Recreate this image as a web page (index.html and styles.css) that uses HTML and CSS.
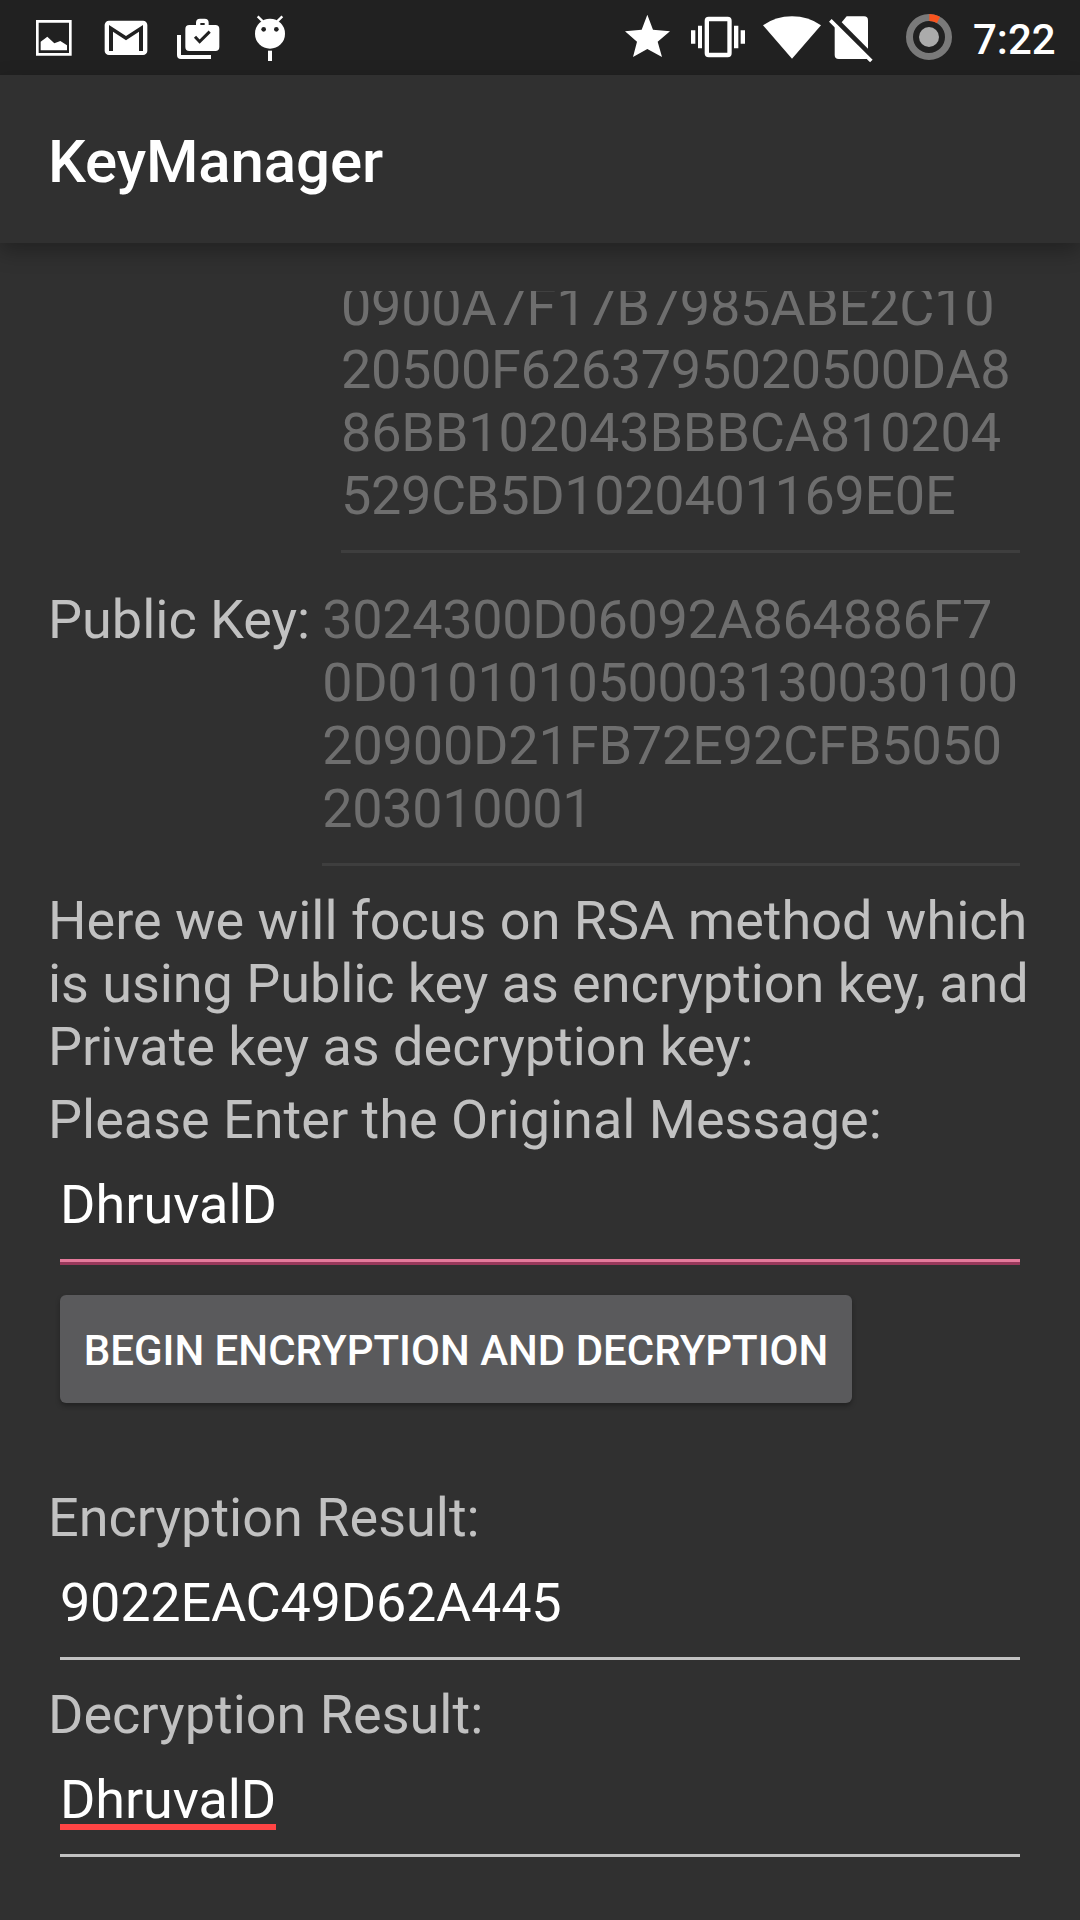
FILE: index.html
```html
<!DOCTYPE html>
<html lang="en">
<head>
<meta charset="utf-8">
<title>KeyManager</title>
<link rel="stylesheet" href="styles.css">
</head>
<body>
<div class="screen">
  <header class="status-bar">
    <svg class="status-icons" width="320" height="75" viewBox="0 0 960 225" fill="#fff">
      <path fill-rule="evenodd" d="M108 60H215V167H108ZM116 68V159H207V68Z"/>
      <path d="M122 125L142 110L163 130L181 123L201 136V151H122Z"/>
      <rect x="314" y="62" width="128" height="103" rx="13"/>
      <path fill="#212121" d="M327 75L378 108L429 75V153H417V95L378 121L339 95V153H327Z"/>
      <path fill-rule="evenodd" d="M568 75H588V68Q588 56 600 56H614Q626 56 626 68V75H646Q658 75 658 87V141Q658 153 646 153H568Q556 153 556 141V87Q556 75 568 75ZM601 75H614V69H601Z"/>
      <path d="M531 105H543V165H633V177H543Q531 177 531 165Z"/>
      <path d="M585 110L599 125L629 95" fill="none" stroke="#212121" stroke-width="9"/>
      <circle cx="810" cy="101" r="45"/>
      <path d="M773 49L789 65M847 49L831 65" stroke="#fff" stroke-width="7"/>
      <path d="M804 152H816V183H804Z"/>
      <circle cx="791" cy="88" r="7" fill="#212121"/><circle cx="829" cy="88" r="7" fill="#212121"/>
    </svg>
    <div class="status-right">
      <svg class="status-icons" width="360" height="75" viewBox="0 0 1080 225" fill="#fff">
        <path d="M142 44L159 89L210 94L173 125L186 171L142 147L99 171L111 125L75 94L125 89Z"/>
        <path fill-rule="evenodd" d="M326 50H383Q395 50 395 62V160Q395 172 383 172H326Q314 172 314 160V62Q314 50 326 50ZM327 64V158H382V64Z"/>
        <path d="M273 91H286V131H273ZM294 77H306V145H294ZM402 77H415V145H402ZM422 91H435V131H422Z"/>
        <path d="M489 76Q527 49 576 49Q625 49 663 76L576 176Z"/>
        <path d="M740 49H792Q804 49 804 61V146L725 67Z"/>
        <path d="M704 78L803 177H716Q704 177 704 165Z"/>
        <path d="M691 61L814 183" stroke="#fff" stroke-width="11"/>
        <circle cx="987" cy="111" r="58.500" fill="none" stroke="#7a7a7a" stroke-width="21"/>
        <path d="M988 42Q1005 42 1020 50L1011 69Q1000 63 988 63Z" fill="#f9541e"/>
        <circle cx="987" cy="111" r="30" fill="#ababab"/>
      </svg>
      <span class="clock">7:22</span>
    </div>
  </header>
  <div class="app-bar"><h1 class="title">KeyManager</h1></div>
  <main class="content">
    <div class="field disabled private-key"><span class="snug">0900A7F17B7985ABE2C10</span><br><span class="tight">20500F6263795020500DA8</span><br><span class="close">86BB102043BBBCA810204</span><br><span class="tight">529CB5D1020401169E0E</span></div>
    <div class="key-row">
      <span class="label">Public Key:</span>
      <div class="field disabled public-key"><span class="tight">3024300D06092A864886F7</span><br><span class="tight">0D010101050003130030100</span><br><span class="close">20900D21FB72E92CFB5050</span><br><span class="tight">203010001</span></div>
    </div>
    <p class="text intro">Here we will focus on RSA method which<br><span class="slight">is using Public key as encryption key, and</span><br>Private key as decryption key:</p>
    <p class="text prompt">Please Enter the Original Message:</p>
    <div class="field focused">DhruvalD</div>
    <button class="button">BEGIN ENCRYPTION AND DECRYPTION</button>
    <p class="text encrypted-label">Encryption Result:</p>
    <div class="field"><span class="snug">9022EAC49D62A445</span></div>
    <p class="text decrypted-label">Decryption Result:</p>
    <div class="field"><span class="misspelled">DhruvalD</span></div>
  </main>
</div>
</body>
</html>
```
FILE: styles.css
```css
* { box-sizing: border-box; }

body {
  margin: 0;
  background: #303030;
  font-family: Roboto, sans-serif;
}

.screen {
  display: flex;
  flex-direction: column;
  width: 1080px;
  height: 1920px;
  overflow: hidden;
  background: #303030;
}

.status-bar {
  display: flex;
  justify-content: space-between;
  flex: none;
  height: 75px;
  background: #212121;
}

.status-icons { display: block; flex: none; }

.status-right {
  display: flex;
  width: 480px;
}

.clock {
  margin-left: 13px;
  color: #fff;
  font-size: 42px;
  font-weight: 500;
  line-height: 80px;
}

.app-bar {
  display: flex;
  align-items: center;
  flex: none;
  height: 168px;
  padding-left: 48px;
  background: #303030;
  box-shadow: 0 8px 20px rgba(0, 0, 0, 0.3);
}

.title {
  margin: 6px 0 0;
  color: #fff;
  font-size: 60px;
  font-weight: 500;
  letter-spacing: -0.12px;
  line-height: 70px;
}

.content {
  display: flex;
  flex-direction: column;
  flex: 1;
  min-height: 0;
  margin-top: 48px;
  padding: 0 48px;
  overflow: hidden;
  font-size: 54px;
  line-height: 63px;
}

.text {
  margin: 0;
  color: #c1c1c1;
  white-space: nowrap;
}

.label { color: #c1c1c1; white-space: nowrap; }

.tight { letter-spacing: -0.33px; }
.snug { letter-spacing: -0.24px; }
.close { letter-spacing: -0.17px; }
.slight { letter-spacing: -0.06px; }

.field {
  flex: none;
  margin: 0 12px;
  padding-bottom: 21px;
  border-bottom: 3px solid #c1c1c1;
  color: #fff;
  white-space: nowrap;
}

.disabled {
  border-bottom-color: #3e3e3e;
  color: #6e6e6e;
}

.private-key {
  height: 278px;
  margin: -16px 12px 0 293px;
  padding-bottom: 0;
}

.key-row {
  display: flex;
  justify-content: space-between;
  flex: none;
  height: 278px;
  margin-top: 35px;
}

.public-key { width: 698px; }

.intro { margin-top: 23px; }
.prompt { margin-top: 10px; }

.focused {
  padding-bottom: 23px;
  border-bottom: 3px solid #e57b9c;
  box-shadow: 0 3px #98395b;
}

.button {
  align-self: flex-start;
  flex: none;
  width: 792px;
  height: 108px;
  margin: 33px 12px 0;
  padding: 4px 0 0;
  border: 0;
  border-radius: 6px;
  background: #5a5a5c;
  box-shadow: 0 3px 5px rgba(0, 0, 0, 0.3);
  color: #fff;
  font: 500 42px/50px Roboto, sans-serif;
  white-space: nowrap;
}

.encrypted-label { margin-top: 83px; }
.text + .field { margin-top: 22px; }
.text + .field:not(.focused) { padding-bottom: 23px; }
.decrypted-label { margin-top: 23px; }

.misspelled {
  display: inline-block;
  height: 63px;
  letter-spacing: -0.12px;
  background: linear-gradient(#ff4444, #ff4444) 0 56px / 100% 6px no-repeat;
}
```
